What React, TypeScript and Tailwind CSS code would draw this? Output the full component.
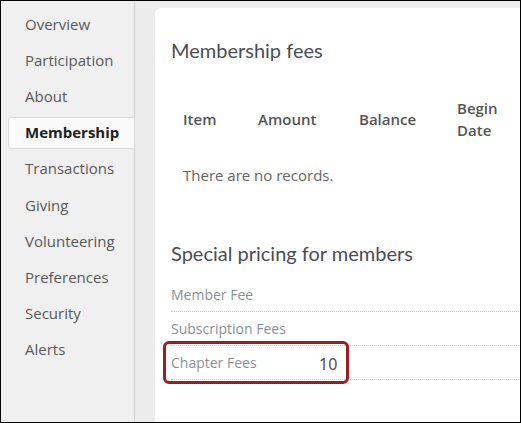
import React from 'react';

const navItems = [
    'Overview',
    'Participation',
    'About',
    'Membership',
    'Transactions',
    'Giving',
    'Volunteering',
    'Preferences',
    'Security',
    'Alerts',
];

const pricing = [
    { label: 'Member Fee', value: '' },
    { label: 'Subscription Fees', value: '' },
    { label: 'Chapter Fees', value: '10' },
];

export default function App() {
    return (
        <div className="w-[521px] h-[423px] border border-black overflow-hidden flex bg-[#ececec] font-['Open_Sans',sans-serif]">
            {/* Sidebar */}
            <nav className="w-[134px] shrink-0 bg-[#f0f0f0] border-r border-[#cfcfcf] pt-[5px] flex flex-col">
                {navItems.map((item) => {
                    const active = item === 'Membership';
                    return (
                        <div
                            key={item}
                            className={
                                active
                                    ? 'ml-[7px] -mr-px h-[32px] my-[2px] flex items-center pl-[16px] bg-[#fafafa] border border-[#d9d9d9] rounded-l-[3px] text-[15px] font-bold text-[#222]'
                                    : 'h-[36.2px] flex items-center pl-[24px] text-[15px] text-[#595959]'
                            }
                        >
                            {item}
                        </div>
                    );
                })}
            </nav>

            {/* Main */}
            <main className="flex-1 pl-[20px] pt-[7px]">
                <div className="bg-white rounded-tl-[6px] h-[430px] w-[400px] pl-[16px] pt-[32px]">
                    <h2 className="text-[20px] text-[#4a4d55] font-['Lato',sans-serif] leading-none">Membership fees</h2>

                    <div className="mt-[37px] pl-[12px] flex text-[15px] font-semibold text-[#555] leading-[22px]">
                        <div className="w-[75px] self-center">Item</div>
                        <div className="w-[101px] self-center">Amount</div>
                        <div className="w-[98px] self-center">Balance</div>
                        <div>
                            Begin
                            <br />
                            Date
                        </div>
                    </div>

                    <p className="mt-[23px] pl-[12px] text-[15px] text-[#666]">There are no records.</p>

                    <h2 className="mt-[56px] text-[20px] text-[#4a4d55] font-['Lato',sans-serif] leading-none">Special pricing for members</h2>

                    <div className="mt-[15px] w-[400px]">
                        {pricing.map((row) => (
                            <div
                                key={row.label}
                                className="relative h-[34.3px] flex items-center border-b border-dotted border-[#cfcfcf] text-[14px] text-[#8a9099]"
                            >
                                <span className="w-[148px]">{row.label}</span>
                                {row.value && <span className="text-[16px] text-[#444] pt-[2px]">{row.value}</span>}
                                {row.label === 'Chapter Fees' && (
                                    <div className="absolute left-[-8px] top-[-5px] w-[186px] h-[43px] border-[3px] border-[#9b1c22] rounded-[6px]" />
                                )}
                            </div>
                        ))}
                    </div>
                </div>
            </main>
        </div>
    );
}
